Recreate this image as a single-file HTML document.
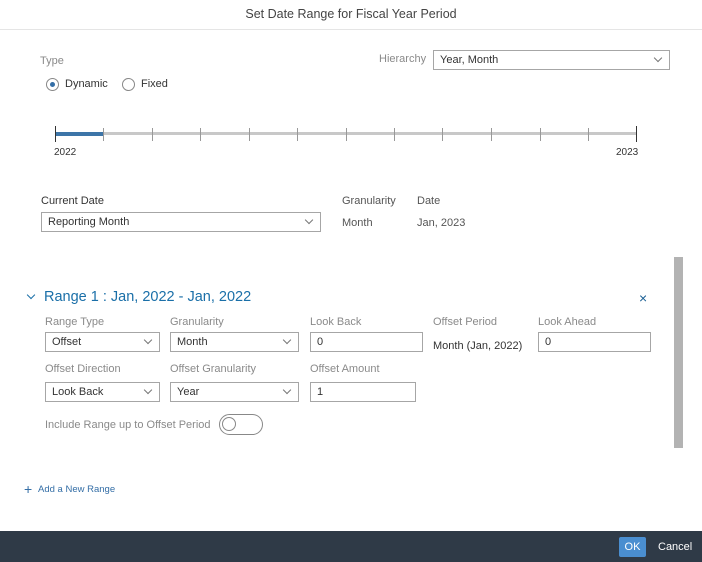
<!DOCTYPE html>
<html><head><style>
*{margin:0;padding:0;box-sizing:border-box}
body{width:702px;height:562px;background:#fff;position:relative;overflow:hidden;font-family:"Liberation Sans",sans-serif;font-size:11px;color:#333}
.a{position:absolute;white-space:nowrap}
.lbl{color:#8a8a8a}
.box{position:absolute;border:1px solid #a6a6a6;background:#fff;padding:0 6px;line-height:18px;font-size:11px;color:#333}
.dd::after{content:"";position:absolute;right:8px;top:4px;width:5px;height:5px;border-right:1px solid #777;border-bottom:1px solid #777;transform:rotate(45deg)}
.tk{position:absolute;width:1px;background:#999;top:128px;height:13px}
</style></head><body>
<div class="a" style="left:0;width:702px;top:7px;text-align:center;font-size:12.5px;color:#444">Set Date Range for Fiscal Year Period</div>
<div class="a" style="left:0;width:702px;top:29px;height:1px;background:#e5e5e5"></div>

<div class="a lbl" style="left:40px;top:55px">Type</div>
<div class="a" style="left:46px;top:78px;width:13px;height:13px;border:1px solid #888;border-radius:50%"></div>
<div class="a" style="left:50px;top:82px;width:5px;height:5px;background:#346ea6;border-radius:50%"></div>
<div class="a" style="left:65px;top:78px">Dynamic</div>
<div class="a" style="left:122px;top:78px;width:13px;height:13px;border:1px solid #888;border-radius:50%"></div>
<div class="a" style="left:141px;top:78px">Fixed</div>

<div class="a lbl" style="left:379px;top:53px">Hierarchy</div>
<div class="box dd" style="left:433px;top:50px;width:237px;height:20px">Year, Month</div>

<div class="a" style="left:55px;top:132px;width:581px;height:3px;background:#c8c8c8"></div>
<div class="a" style="left:55px;top:132px;width:48px;height:4px;background:#3d75a8"></div>
<div class="tk" style="left:55px;top:126px;height:16px;background:#333"></div>
<div class="tk" style="left:103px"></div><div class="tk" style="left:152px"></div><div class="tk" style="left:200px"></div><div class="tk" style="left:249px"></div><div class="tk" style="left:297px"></div><div class="tk" style="left:346px"></div><div class="tk" style="left:394px"></div><div class="tk" style="left:442px"></div><div class="tk" style="left:491px"></div><div class="tk" style="left:540px"></div><div class="tk" style="left:588px"></div>
<div class="tk" style="left:636px;top:126px;height:16px;background:#333"></div>
<div class="a" style="left:54px;top:147px;font-size:10px">2022</div>
<div class="a" style="left:616px;top:147px;font-size:10px">2023</div>

<div class="a" style="left:41px;top:195px">Current Date</div>
<div class="box dd" style="left:41px;top:212px;width:280px;height:20px">Reporting Month</div>
<div class="a" style="left:342px;top:195px;color:#555">Granularity</div>
<div class="a" style="left:342px;top:217px;color:#555">Month</div>
<div class="a" style="left:417px;top:195px;color:#555">Date</div>
<div class="a" style="left:417px;top:217px;color:#555">Jan, 2023</div>

<div class="a" style="left:674px;top:257px;width:9px;height:191px;background:#b3b3b3"></div>

<div class="a" style="left:28px;top:292px;width:6px;height:6px;border-right:1.5px solid #1a6fa8;border-bottom:1.5px solid #1a6fa8;transform:rotate(45deg)"></div>
<div class="a" style="left:44px;top:289px;font-size:14.5px;color:#1a6fa8">Range 1 : Jan, 2022 - Jan, 2022</div>
<div class="a" style="left:639px;top:290px;font-size:14px;color:#1a5f94">×</div>

<div class="a lbl" style="left:45px;top:316px">Range Type</div>
<div class="a lbl" style="left:170px;top:316px">Granularity</div>
<div class="a lbl" style="left:310px;top:316px">Look Back</div>
<div class="a lbl" style="left:433px;top:316px">Offset Period</div>
<div class="a lbl" style="left:538px;top:316px">Look Ahead</div>
<div class="box dd" style="left:45px;top:332px;width:115px;height:20px">Offset</div>
<div class="box dd" style="left:170px;top:332px;width:129px;height:20px">Month</div>
<div class="box" style="left:310px;top:332px;width:113px;height:20px">0</div>
<div class="a" style="left:433px;top:340px">Month (Jan, 2022)</div>
<div class="box" style="left:538px;top:332px;width:113px;height:20px">0</div>

<div class="a lbl" style="left:45px;top:363px">Offset Direction</div>
<div class="a lbl" style="left:170px;top:363px">Offset Granularity</div>
<div class="a lbl" style="left:310px;top:363px">Offset Amount</div>
<div class="box dd" style="left:45px;top:382px;width:115px;height:20px">Look Back</div>
<div class="box dd" style="left:170px;top:382px;width:129px;height:20px">Year</div>
<div class="box" style="left:310px;top:382px;width:106px;height:20px">1</div>

<div class="a lbl" style="left:45px;top:419px">Include Range up to Offset Period</div>
<div class="a" style="left:219px;top:414px;width:44px;height:21px;border:1px solid #888;border-radius:11px"></div>
<div class="a" style="left:222px;top:417px;width:14px;height:14px;border:1px solid #888;border-radius:50%"></div>

<div class="a" style="left:24px;top:481px;font-size:14px;color:#346ea6">+</div>
<div class="a" style="left:38px;top:484px;font-size:9.5px;color:#346ea6">Add a New Range</div>

<div class="a" style="left:0;top:531px;width:702px;height:31px;background:#2f3a47"></div>
<div class="a" style="left:619px;top:537px;width:27px;height:20px;background:#4a8ed0;color:#fff;text-align:center;line-height:20px;border-radius:2px">OK</div>
<div class="a" style="left:658px;top:541px;color:#fff">Cancel</div>
</body></html>
